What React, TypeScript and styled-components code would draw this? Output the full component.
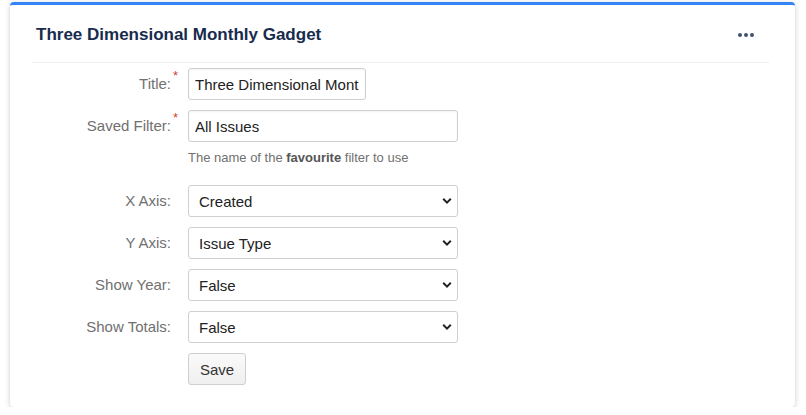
import React from 'react';
import styled, { createGlobalStyle } from 'styled-components';

const GlobalStyle = createGlobalStyle`
  html, body {
    margin: 0;
    padding: 0;
    background: #fff;
    font-family: 'Liberation Sans', Arial, sans-serif;
  }
`;

const Page = styled.div`
  padding: 2px 11px 0 10px;
`;

const Card = styled.section`
  height: 405px;
  box-sizing: border-box;
  background: #fff;
  border-top: 3px solid #3384f5;
  border-radius: 4px;
  box-shadow: 0 1px 6px rgba(0, 0, 0, 0.16), 0 2px 3px rgba(0, 0, 0, 0.06);
`;

const Header = styled.header`
  display: flex;
  align-items: center;
  justify-content: space-between;
  height: 58px;
  margin: 0 26px 0 22px;
  padding: 2px 15px 0 4px;
  box-sizing: border-box;
  border-bottom: 1px solid #efefef;
`;

const Title = styled.h2`
  margin: 0;
  font-size: 17px;
  font-weight: bold;
  color: #172b4d;
`;

const MoreButton = styled.button`
  display: flex;
  gap: 2px;
  padding: 0;
  border: 0;
  background: none;
  cursor: pointer;
`;

const Dot = styled.span`
  width: 4px;
  height: 4px;
  border-radius: 50%;
  background: #42526e;
`;

const Form = styled.form`
  display: grid;
  grid-template-columns: 161px 270px;
  column-gap: 17px;
  row-gap: 10px;
  padding-top: 5px;
  font-size: 15px;
`;

const Label = styled.label`
  position: relative;
  text-align: right;
  line-height: 32px;
  color: #707070;
`;

const Required = styled.span`
  position: absolute;
  right: -7px;
  top: -8px;
  color: #d04437;
  font-size: 13px;
`;

const Field = styled.div`
  display: flex;
  flex-direction: column;
`;

const TextInput = styled.input<{ $width: number }>`
  box-sizing: border-box;
  width: ${({ $width }) => $width}px;
  height: 32px;
  padding: 0 6px;
  border: 1px solid #cfcfcf;
  border-radius: 3px;
  font-family: 'Liberation Sans', Arial, sans-serif;
  font-size: 15px;
  color: #222;
  box-shadow: inset 0 1px 2px rgba(0, 0, 0, 0.05);
  outline: none;
`;

const Help = styled.div`
  margin: 8px 0 9px;
  font-size: 13px;
  line-height: 16px;
  color: #707070;

  b {
    color: #555;
  }
`;

const SelectWrap = styled.div`
  position: relative;
  width: 270px;
`;

const Select = styled.select`
  appearance: none;
  box-sizing: border-box;
  width: 100%;
  height: 32px;
  padding: 0 30px 0 10px;
  border: 1px solid #cfcfcf;
  border-radius: 3px;
  background: #fff;
  font-family: 'Liberation Sans', Arial, sans-serif;
  font-size: 15px;
  color: #222;
  outline: none;
`;

const Chevron = styled.svg`
  position: absolute;
  right: 6px;
  top: 12px;
  pointer-events: none;
`;

const SaveButton = styled.button`
  width: 58px;
  height: 32px;
  border: 1px solid #cfcfcf;
  border-radius: 3px;
  background: linear-gradient(#fafafa, #efefef);
  font-family: 'Liberation Sans', Arial, sans-serif;
  font-size: 15px;
  color: #333;
`;

const Spacer = styled.div``;

const selects: { label: string; value: string; options: string[] }[] = [
  { label: 'X Axis:', value: 'Created', options: ['Created', 'Updated', 'Resolved', 'Due Date'] },
  { label: 'Y Axis:', value: 'Issue Type', options: ['Issue Type', 'Priority', 'Status', 'Assignee'] },
  { label: 'Show Year:', value: 'False', options: ['False', 'True'] },
  { label: 'Show Totals:', value: 'False', options: ['False', 'True'] }
];

export default function App() {
  return (
    <Page>
      <GlobalStyle />
      <Card>
        <Header>
          <Title>Three Dimensional Monthly Gadget</Title>
          <MoreButton type="button" aria-label="More">
            <Dot />
            <Dot />
            <Dot />
          </MoreButton>
        </Header>
        <Form onSubmit={e => e.preventDefault()}>
          <Label>
            Title:<Required>*</Required>
          </Label>
          <Field>
            <TextInput $width={178} defaultValue="Three Dimensional Monthly Gadget" />
          </Field>

          <Label>
            Saved Filter:<Required>*</Required>
          </Label>
          <Field>
            <TextInput $width={270} defaultValue="All Issues" />
            <Help>
              The name of the <b>favourite</b> filter to use
            </Help>
          </Field>

          {selects.map(s => (
            <React.Fragment key={s.label}>
              <Label>{s.label}</Label>
              <SelectWrap>
                <Select defaultValue={s.value}>
                  {s.options.map(o => (
                    <option key={o}>{o}</option>
                  ))}
                </Select>
                <Chevron width="10" height="8" viewBox="0 0 10 8">
                  <path d="M1.2 1.8 5 5.6 8.8 1.8" fill="none" stroke="#222" strokeWidth="2" />
                </Chevron>
              </SelectWrap>
            </React.Fragment>
          ))}

          <Spacer />
          <Field>
            <SaveButton type="submit">Save</SaveButton>
          </Field>
        </Form>
      </Card>
    </Page>
  );
}
